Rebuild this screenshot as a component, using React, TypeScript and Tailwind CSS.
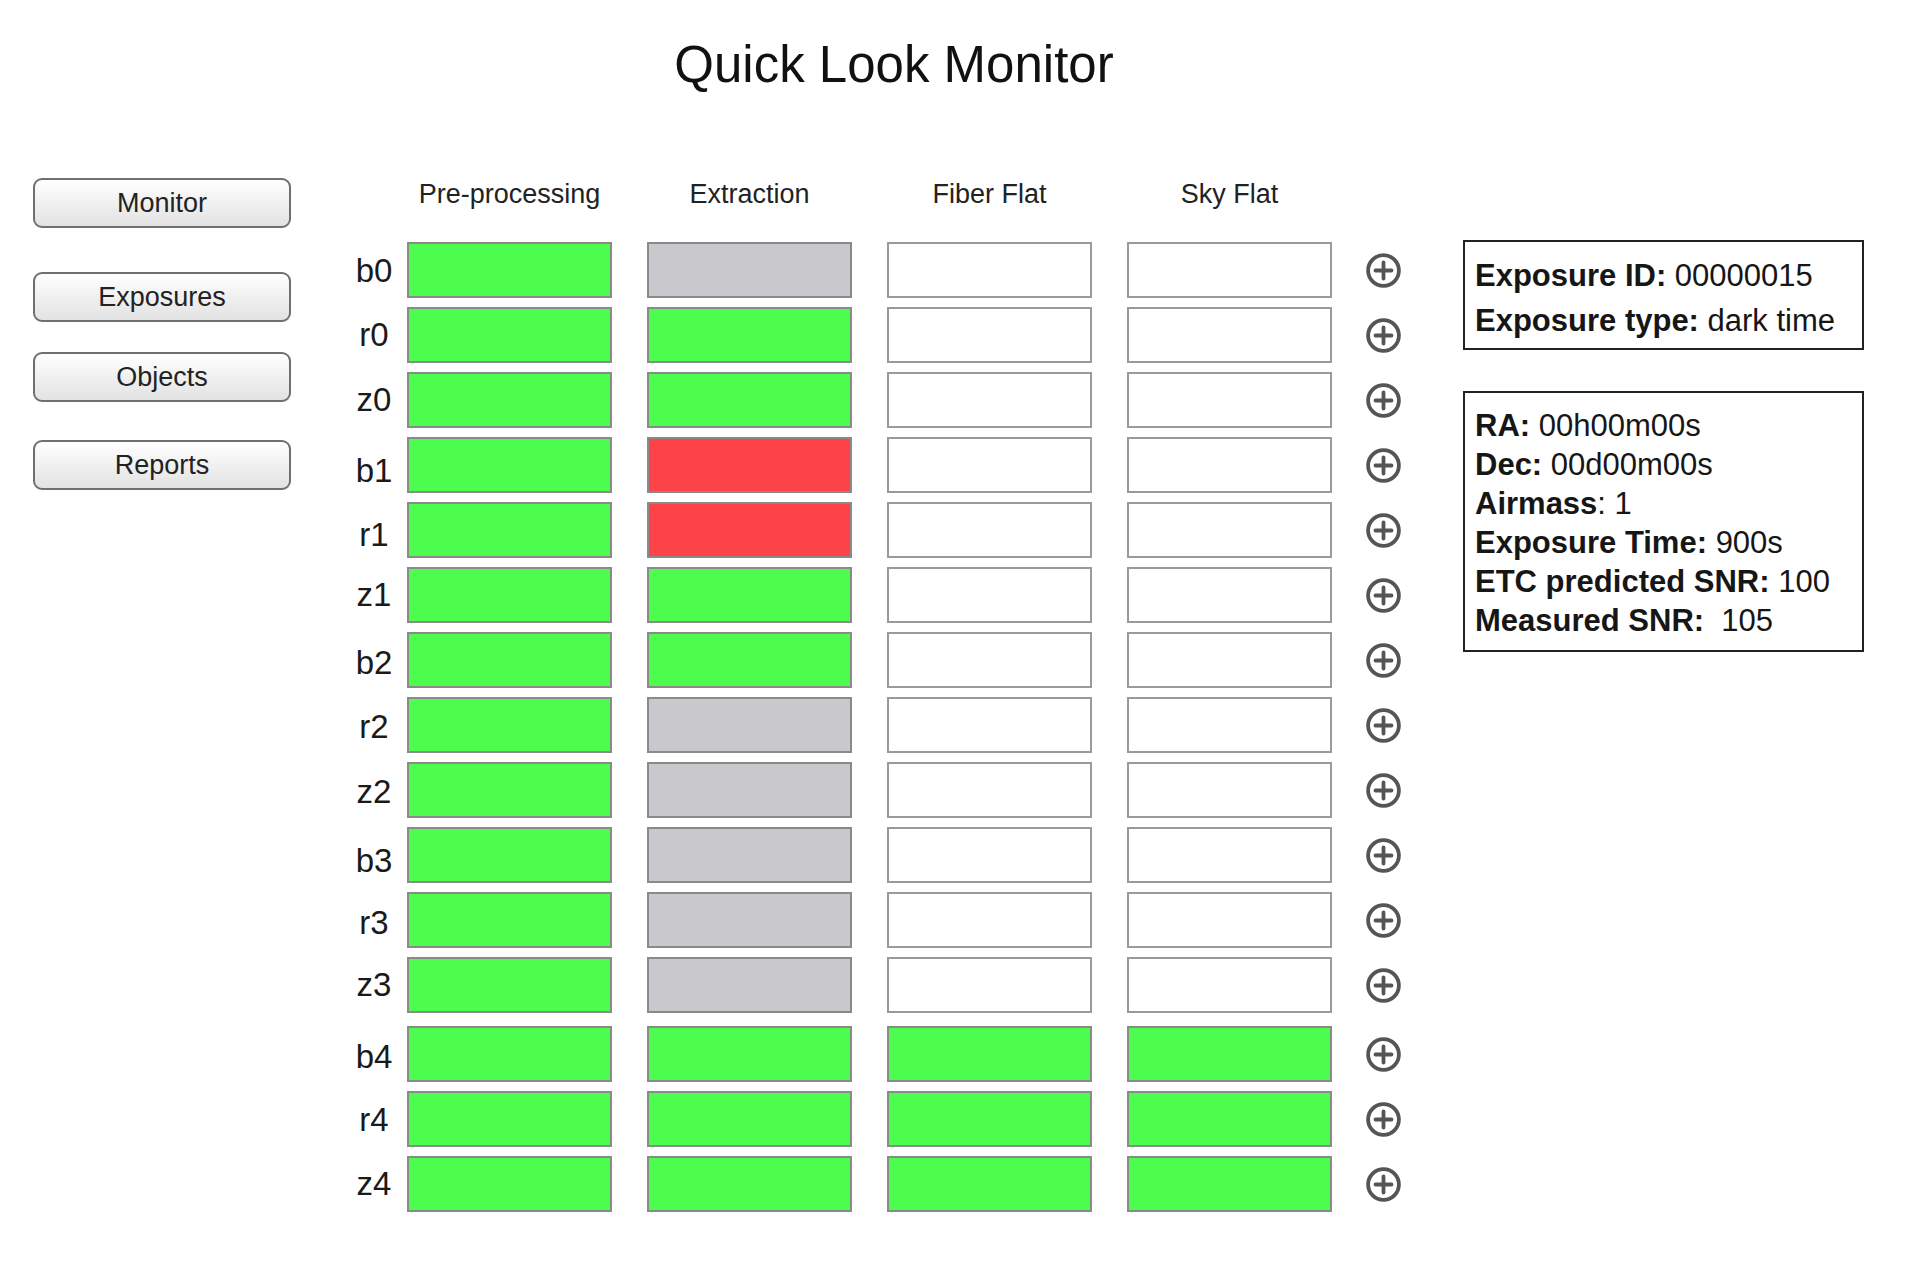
import React from "react";

type Status = "ok" | "fail" | "idle" | "none";

const fill: Record<Status, string> = {
  ok: "bg-[#4dfd4d] border-[#8a8a8a]",
  fail: "bg-[#fd4248] border-[#8a8a8a]",
  idle: "bg-[#c9c8cc] border-[#8a8a8a]",
  none: "bg-white border-[#9a9a9a]",
};

// label nudges keep the slightly uneven look of the mockup
const rows: { name: string; cells: Status[]; nudge: string; gap: string }[] = [
  { name: "b0", cells: ["ok", "idle", "none", "none"], nudge: "pt-[2px]", gap: "" },
  { name: "r0", cells: ["ok", "ok", "none", "none"], nudge: "", gap: "mt-[9px]" },
  { name: "z0", cells: ["ok", "ok", "none", "none"], nudge: "", gap: "mt-[9px]" },
  { name: "b1", cells: ["ok", "fail", "none", "none"], nudge: "pt-[12px]", gap: "mt-[9px]" },
  { name: "r1", cells: ["ok", "fail", "none", "none"], nudge: "pt-[10px]", gap: "mt-[9px]" },
  { name: "z1", cells: ["ok", "ok", "none", "none"], nudge: "", gap: "mt-[9px]" },
  { name: "b2", cells: ["ok", "ok", "none", "none"], nudge: "pt-[6px]", gap: "mt-[9px]" },
  { name: "r2", cells: ["ok", "idle", "none", "none"], nudge: "pt-[4px]", gap: "mt-[9px]" },
  { name: "z2", cells: ["ok", "idle", "none", "none"], nudge: "pt-[4px]", gap: "mt-[9px]" },
  { name: "b3", cells: ["ok", "idle", "none", "none"], nudge: "pt-[12px]", gap: "mt-[9px]" },
  { name: "r3", cells: ["ok", "idle", "none", "none"], nudge: "pt-[6px]", gap: "mt-[9px]" },
  { name: "z3", cells: ["ok", "idle", "none", "none"], nudge: "", gap: "mt-[9px]" },
  { name: "b4", cells: ["ok", "ok", "ok", "ok"], nudge: "pt-[6px]", gap: "mt-[13px]" },
  { name: "r4", cells: ["ok", "ok", "ok", "ok"], nudge: "pt-[2px]", gap: "mt-[9px]" },
  { name: "z4", cells: ["ok", "ok", "ok", "ok"], nudge: "", gap: "mt-[9px]" },
];

const steps = ["Pre-processing", "Extraction", "Fiber Flat", "Sky Flat"];

const navItems = [
  { name: "Monitor", gap: "mt-[4px]" },
  { name: "Exposures", gap: "mt-[44px]" },
  { name: "Objects", gap: "mt-[30px]" },
  { name: "Reports", gap: "mt-[38px]" },
];

function PlusCircle() {
  return (
    <svg width="37" height="37" viewBox="0 0 37 37" fill="none" stroke="#555" strokeWidth="3.8" strokeLinecap="round">
      <circle cx="18.5" cy="18.5" r="15.4" />
      <path d="M18.5 10.5v16M10.5 18.5h16" />
    </svg>
  );
}

function Info({ label, value }: { label: string; value: string }) {
  return (
    <div className="whitespace-pre">
      <span className="font-bold">{label}</span>
      {value}
    </div>
  );
}

export default function App() {
  return (
    <div className="min-h-screen w-full bg-white text-[#161616] font-['Liberation_Sans',Arial,sans-serif]">
      <div className="w-[1788px] pt-[36px] h-[174px] text-center">
        <h1 className="text-[51px] leading-[58px] text-[#111]">Quick Look Monitor</h1>
      </div>

      <div className="flex items-start">
        <nav className="ml-[33px] w-[258px] flex flex-col">
          {navItems.map((item) => (
            <button
              key={item.name}
              className={`${item.gap} h-[50px] w-full rounded-[9px] border-2 border-[#6f6f6f] bg-gradient-to-b from-white to-[#e2e2e2] text-[27px] text-[#222] shadow-[inset_0_1px_0_#fff]`}
            >
              {item.name}
            </button>
          ))}
        </nav>

        <div className="ml-[53px] flex flex-col">
          <div className="flex h-[40px] items-center pl-[63px] gap-[35px]">
            {steps.map((s) => (
              <div key={s} className="w-[205px] text-center text-[27px] text-[#222]">
                {s}
              </div>
            ))}
          </div>

          <div className="mt-[28px] flex flex-col">
            {rows.map((row) => (
              <div key={row.name} className={`${row.gap} flex h-[56px] items-center`}>
                <div className={`w-[60px] text-center text-[33px] leading-[36px] text-[#1a1a1a] ${row.nudge}`}>
                  {row.name}
                </div>
                <div className="ml-[3px] flex gap-[35px]">
                  {row.cells.map((c, i) => (
                    <div key={i} className={`h-[56px] w-[205px] border-2 ${fill[c]}`} />
                  ))}
                </div>
                <div className="ml-[33px] flex items-center">
                  <PlusCircle />
                </div>
              </div>
            ))}
          </div>
        </div>

        <aside className="ml-[61px] w-[401px] flex flex-col">
          <div className="mt-[66px] h-[110px] border-2 border-[#222] pl-[10px] pt-[11px] text-[31px] leading-[45px]">
            <Info label="Exposure ID:" value=" 00000015" />
            <Info label="Exposure type:" value=" dark time" />
          </div>
          <div className="mt-[41px] h-[261px] border-2 border-[#222] pl-[10px] pt-[13px] text-[31px] leading-[39px]">
            <Info label="RA:" value=" 00h00m00s" />
            <Info label="Dec:" value=" 00d00m00s" />
            <Info label="Airmass" value=": 1" />
            <Info label="Exposure Time:" value=" 900s" />
            <Info label="ETC predicted SNR:" value=" 100" />
            <Info label="Measured SNR:" value="  105" />
          </div>
        </aside>
      </div>
    </div>
  );
}
